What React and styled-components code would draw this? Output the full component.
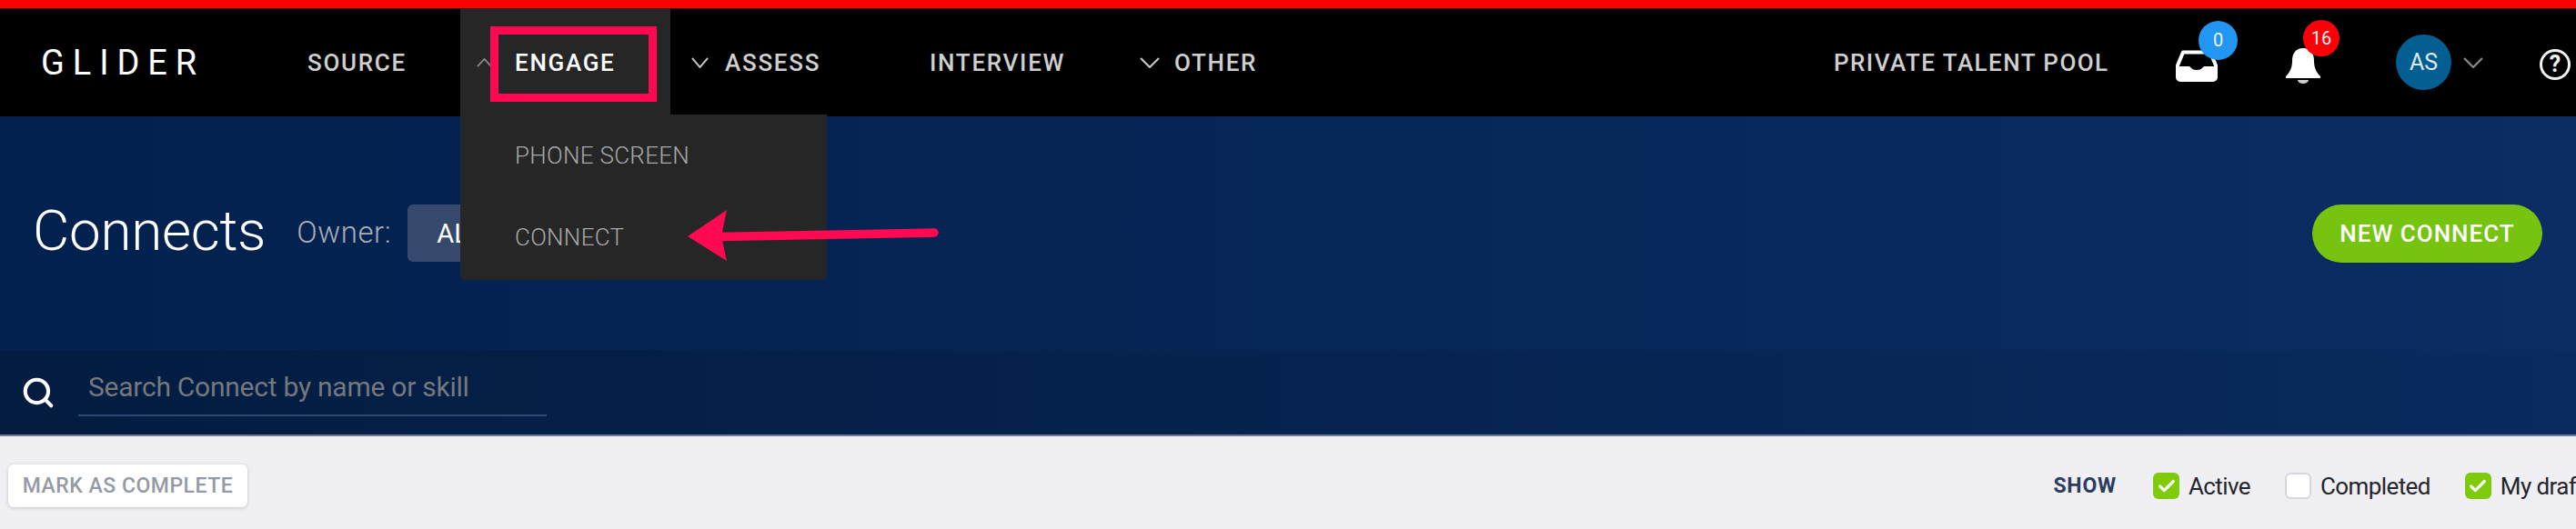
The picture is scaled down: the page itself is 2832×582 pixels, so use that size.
import React from "react";
import styled, { createGlobalStyle } from "styled-components";
import { Check, Search } from "lucide-react";

const GlobalStyle = createGlobalStyle`
    html, body {
        margin: 0;
        padding: 0;
        background: #efeff4;
        overflow: hidden;
    }
    body {
        font-family: "Roboto", "Liberation Sans", sans-serif;
    }
`;

const Page = styled.div`
    position: relative;
    width: 2832px;
    height: 582px;
    overflow: hidden;
    background: #efeff4;
`;

const TopStripe = styled.div`
    height: 9px;
    background: #ff0000;
`;

const Header = styled.header`
    display: flex;
    align-items: stretch;
    height: 119px;
    padding-left: 45px;
    padding-right: 6px;
    background: #000;
`;

const Logo = styled.div`
    width: 293px;
    align-self: center;
    color: #fff;
    font-size: 38px;
    font-weight: 400;
    letter-spacing: 8.9px;
    line-height: 38px;
`;

const NavItem = styled.div`
    position: relative;
    display: flex;
    align-items: center;
    width: ${(p) => p.$width}px;
    height: 119px;
    padding-left: ${(p) => p.$indent || 0}px;
    box-sizing: border-box;
    gap: ${(p) => p.$gap || 0}px;
    background: ${(p) => (p.$open ? "#262626" : "transparent")};
    color: ${(p) => (p.$open ? "#fff" : "#cfcfcf")};
    font-size: 26px;
    font-weight: 500;
    letter-spacing: 1.7px;
    white-space: nowrap;
`;

const Chevron = styled.svg`
    flex: none;
    transform: ${(p) => (p.$up ? "rotate(180deg)" : "none")};
    margin-right: ${(p) => p.$after || 0}px;
`;

const Menu = styled.div`
    position: absolute;
    top: 117px;
    left: 0;
    z-index: 2;
    display: flex;
    flex-direction: column;
    width: 403px;
    height: 182px;
    box-sizing: border-box;
    padding: 20px 0 0 60px;
    border-radius: 0 0 6px 6px;
    background: #262626;
`;

const MenuLink = styled.div`
    flex: none;
    height: 90px;
    color: #a8a8a8;
    font-size: 26px;
    font-weight: 300;
    letter-spacing: 0.3px;
    line-height: 50px;
`;

const HeaderRight = styled.div`
    display: flex;
    align-items: center;
    margin-left: auto;
`;

const TalentLink = styled.div`
    width: 303px;
    margin-right: 72px;
    color: #cfcfcf;
    font-size: 26px;
    font-weight: 500;
    letter-spacing: 1.45px;
    white-space: nowrap;
`;

const IconSlot = styled.div`
    position: relative;
    display: flex;
    width: ${(p) => p.$width}px;
    margin-right: ${(p) => p.$after}px;
    margin-top: 5px;
`;

const Badge = styled.span`
    position: absolute;
    top: ${(p) => p.$top}px;
    left: ${(p) => p.$left}px;
    display: flex;
    align-items: center;
    justify-content: center;
    width: ${(p) => p.$size}px;
    height: ${(p) => p.$size}px;
    border-radius: 50%;
    background: ${(p) => p.$color};
    color: #f2f2f2;
    font-size: 20px;
`;

const Avatar = styled.div`
    display: flex;
    align-items: center;
    justify-content: center;
    width: 61px;
    height: 61px;
    margin-right: 13px;
    border-radius: 50%;
    background: #035f91;
    color: #dfe9ef;
    font-size: 25px;
`;

const HelpIcon = styled.div`
    display: flex;
    align-items: center;
    justify-content: center;
    width: 34px;
    height: 34px;
    margin-top: 4px;
    border: 3px solid #f2f2f2;
    border-radius: 50%;
    box-sizing: border-box;
    color: #f2f2f2;
    font-size: 25px;
    font-weight: 700;
`;

const Hero = styled.section`
    display: flex;
    align-items: center;
    height: 257px;
    padding: 0 37px 0 36px;
    box-sizing: border-box;
    background: linear-gradient(90deg, #03214e 0%, #062657 50%, #0b2d63 100%);
`;

const Title = styled.h1`
    margin: 0 0 5px;
    color: #fff;
    font-size: 62px;
    font-weight: 300;
    letter-spacing: -0.3px;
    line-height: 80px;
`;

const OwnerLabel = styled.span`
    margin-left: 34px;
    margin-bottom: 3px;
    color: #a9aeb8;
    font-size: 33px;
    font-weight: 300;
    letter-spacing: 0.6px;
`;

const OwnerSelect = styled.div`
    display: flex;
    align-items: center;
    width: 240px;
    height: 63px;
    margin-left: 18px;
    padding-left: 32px;
    box-sizing: border-box;
    border-radius: 6px;
    background: #36496d;
    color: #fff;
    font-size: 29px;
`;

const NewButton = styled.button`
    width: 253px;
    height: 64px;
    margin-left: auto;
    border: 0;
    border-radius: 32px;
    background: #76c40f;
    color: #fff;
    font-family: inherit;
    font-size: 26px;
    font-weight: 500;
    letter-spacing: 1px;
`;

const SearchBar = styled.div`
    display: flex;
    align-items: center;
    height: 95px;
    padding-left: 23px;
    box-sizing: border-box;
    border-bottom: 2px solid #6c7a94;
    background: linear-gradient(90deg, #031c40 0%, #06234f 50%, #0a2a5e 100%);
    color: #fff;
`;

const SearchField = styled.div`
    width: 515px;
    height: 56px;
    margin-left: 25px;
    margin-top: -4px;
    padding-left: 11px;
    box-sizing: border-box;
    border-bottom: 2px solid #2e4a72;
    color: #74787f;
    font-size: 30px;
    letter-spacing: -0.25px;
    line-height: 48px;
`;

const Toolbar = styled.div`
    display: flex;
    align-items: center;
    height: 102px;
    padding: 7px 0 0 9px;
    box-sizing: border-box;
    white-space: nowrap;
`;

const MarkButton = styled.button`
    width: 263px;
    height: 47px;
    padding: 0;
    border: 0;
    border-radius: 6px;
    background: #fff;
    box-shadow: 0 1px 4px rgba(0, 0, 0, 0.18);
    color: #959aa6;
    font-family: inherit;
    font-size: 23px;
    font-weight: 500;
    letter-spacing: 0.5px;
`;

const ShowLabel = styled.span`
    margin-left: auto;
    margin-right: 40px;
    color: #2c3c5c;
    font-size: 23px;
    font-weight: 700;
    letter-spacing: 0.8px;
`;

const Filters = styled.div`
    display: flex;
    gap: 38px;
    width: 465px;
    overflow: hidden;
`;

const Filter = styled.label`
    display: flex;
    align-items: center;
    gap: 10px;
    color: #24262b;
    font-size: 26px;
    letter-spacing: -0.6px;
`;

const CheckBox = styled.span`
    display: flex;
    align-items: center;
    justify-content: center;
    width: 29px;
    height: 29px;
    box-sizing: border-box;
    border-radius: 6px;
    background: ${(p) => (p.$checked ? "#7ecb0a" : "#fff")};
    border: ${(p) => (p.$checked ? "0" : "2px solid #d6d6dc")};
    color: #fff;
`;

const Annotation = styled.svg`
    position: absolute;
    top: 0;
    left: 0;
    z-index: 3;
    pointer-events: none;
`;

const NavChevron = ({ width = 19, height = 12, color = "#c4c4c4", up, after }) => (
    <Chevron width={width} height={height} viewBox="0 0 20 12" preserveAspectRatio="none" $up={up} $after={after}>
        <path d="M1 1l9 10 9-10" fill="none" stroke={color} strokeWidth="2" />
    </Chevron>
);

const InboxIcon = () => (
    <svg width="48" height="37" viewBox="0 0 48 37">
        <path d="M9 4.5h30L45 19v13a3 3 0 0 1-3 3H6a3 3 0 0 1-3-3V19z" fill="none" stroke="#fff" strokeWidth="4" strokeLinejoin="round" />
        <path d="M2 20h14c1 0 2 4 8 4s7-4 8-4h14v12a4 4 0 0 1-4 4H6a4 4 0 0 1-4-4z" fill="#fff" />
    </svg>
);

const BellIcon = () => (
    <svg width="40" height="41" viewBox="0 0 40 41">
        <path d="M20 2c-9 0-12 7-12 14 0 8-3 13-7 17v2h38v-2c-4-4-7-9-7-17 0-7-3-14-12-14z" fill="#fff" />
        <path d="M14 37a6 4 0 0 0 12 0z" fill="#cfcfcf" />
    </svg>
);

const App = () => {
    return (
        <Page>
            <GlobalStyle />
            <TopStripe />
            <Header>
                <Logo>GLIDER</Logo>
                <NavItem $width={168}>SOURCE</NavItem>
                <NavItem $width={231} $indent={18} $gap={25} $open>
                    <NavChevron width={17} height={10} color="#8a8a8a" up />
                    <span>ENGAGE</span>
                    <Menu>
                        <MenuLink>PHONE SCREEN</MenuLink>
                        <MenuLink>CONNECT</MenuLink>
                    </Menu>
                </NavItem>
                <NavItem $width={285} $indent={23} $gap={18}>
                    <NavChevron />
                    <span>ASSESS</span>
                </NavItem>
                <NavItem $width={228}>INTERVIEW</NavItem>
                <NavItem $width={180} $indent={3} $gap={16}>
                    <NavChevron width={22} />
                    <span>OTHER</span>
                </NavItem>
                <HeaderRight>
                    <TalentLink>PRIVATE TALENT POOL</TalentLink>
                    <IconSlot $width={48} $after={73}>
                        <InboxIcon />
                        <Badge $top={-30} $left={26} $size={43} $color="#2196f3">0</Badge>
                    </IconSlot>
                    <IconSlot $width={40} $after={82}>
                        <BellIcon />
                        <Badge $top={-29} $left={20} $size={40} $color="#fb0007">16</Badge>
                    </IconSlot>
                    <Avatar>AS</Avatar>
                    <NavChevron width={22} height={12} color="#8a8a8a" after={62} />
                    <HelpIcon>?</HelpIcon>
                </HeaderRight>
            </Header>
            <Hero>
                <Title>Connects</Title>
                <OwnerLabel>Owner:</OwnerLabel>
                <OwnerSelect>ALL</OwnerSelect>
                <NewButton>NEW CONNECT</NewButton>
            </Hero>
            <SearchBar>
                <Search size={38} strokeWidth={2.6} />
                <SearchField>Search Connect by name or skill</SearchField>
            </SearchBar>
            <Toolbar>
                <MarkButton>MARK AS COMPLETE</MarkButton>
                <ShowLabel>SHOW</ShowLabel>
                <Filters>
                    <Filter><CheckBox $checked><Check size={22} strokeWidth={3.5} /></CheckBox>Active</Filter>
                    <Filter><CheckBox />Completed</Filter>
                    <Filter><CheckBox $checked><Check size={22} strokeWidth={3.5} /></CheckBox>My drafts</Filter>
                </Filters>
            </Toolbar>
            <Annotation width="2832" height="582" viewBox="0 0 2832 582">
                <rect x="543.5" y="33.5" width="174" height="74" fill="none" stroke="#ff0a52" strokeWidth="9" />
                <path d="M790 260.5L1027 256" stroke="#ff0a52" strokeWidth="9.5" strokeLinecap="round" />
                <path d="M756 260L799 231L793 260L799 287z" fill="#ff0a52" />
            </Annotation>
        </Page>
    );
};

export default App;
